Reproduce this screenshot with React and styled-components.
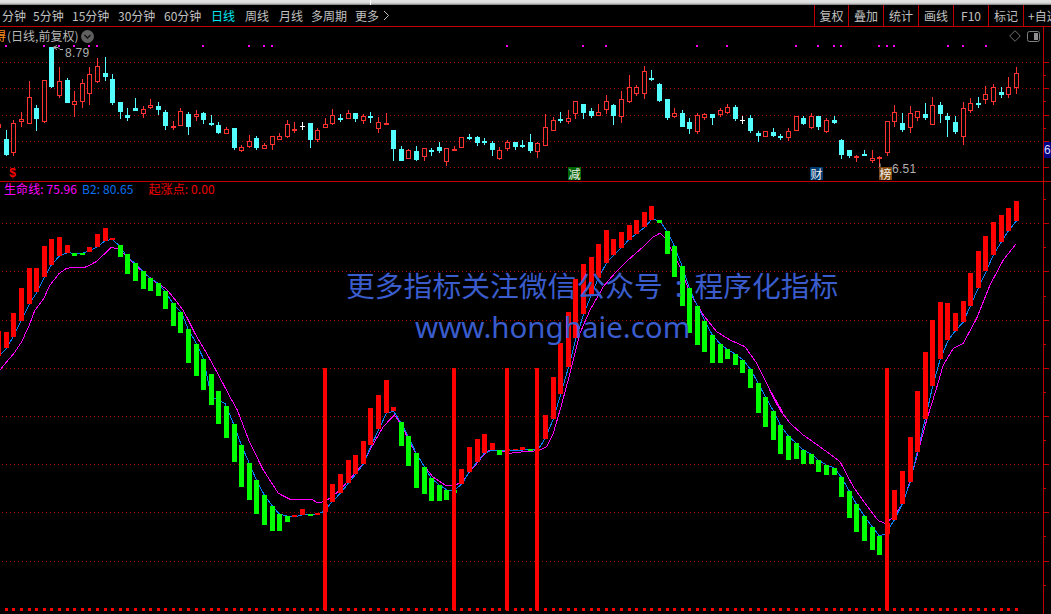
import React from 'react';
import styled, { createGlobalStyle } from 'styled-components';

const Global = createGlobalStyle`
  html, body { margin: 0; padding: 0; background: #000; }
  #root { width: 1051px; height: 614px; overflow: hidden; }
`;

const FONT = `"Noto Sans CJK SC", "Liberation Sans", sans-serif`;
const RED_LINE = '#c00000';
const GRID = '#a80000';

const Shell = styled.div`
  display: flex;
  flex-direction: column;
  width: 1051px;
  height: 614px;
  background: #000;
  overflow: hidden;
  font-family: ${FONT};
`;
const WindowEdge = styled.div`
  display: flex;
  flex: 0 0 5px;
  background: linear-gradient(#e4e4e4 0, #d8d8d8 60%, #777 100%);
`;
const EdgeLeft = styled.div`
  width: 370px;
  border-right: 1px solid #fff;
`;
const Toolbar = styled.div`
  display: flex;
  justify-content: space-between;
  flex: 0 0 21px;
  height: 21px;
  border-bottom: 1px solid ${RED_LINE};
`;
const TabRow = styled.div`
  display: flex;
  align-items: center;
  padding-left: 2px;
`;
const Tab = styled.div`
  width: ${p => p.$w}px;
  flex: none;
  font-size: 12px;
  line-height: 21px;
  color: ${p => (p.$active ? '#00e8f0' : '#c0c0c0')};
  white-space: nowrap;
`;
const Chevron = styled.svg`
  width: 7px;
  height: 11px;
  margin-left: -1px;
`;
const ToolRow = styled.div`
  display: flex;
`;
const ToolButton = styled.div`
  width: ${p => p.$w}px;
  box-sizing: border-box;
  border-left: 1px solid ${RED_LINE};
  font-size: 12px;
  line-height: 21px;
  color: #c0c0c0;
  text-align: center;
  white-space: nowrap;
  overflow: hidden;
`;
const ClippedTool = styled(ToolButton)`
  text-align: left;
  padding-left: 4px;
`;
const Panel = styled.div`
  position: relative;
  flex: 0 0 ${p => p.$h}px;
  height: ${p => p.$h}px;
  border-bottom: ${p => (p.$line ? `1px solid ${RED_LINE}` : 'none')};
`;
const Plot = styled.svg`
  display: block;
  width: 1051px;
  height: 100%;
`;
const TitleBar = styled.div`
  position: absolute;
  left: -6px;
  top: 1px;
  display: flex;
  align-items: center;
  font-size: 12px;
  line-height: 16px;
  color: #b8b8b8;
  white-space: nowrap;
`;
const StockName = styled.span`
  color: #ff9020;
  margin-right: 1px;
`;
const Caret = styled.svg`
  width: 13px;
  height: 13px;
  margin-left: 3px;
`;
const PanelTools = styled.div`
  position: absolute;
  right: 11px;
  top: 3px;
  display: flex;
  align-items: center;
  gap: 6px;
`;
const Price = styled.span`
  position: absolute;
  left: ${p => p.$x}px;
  top: ${p => p.$y}px;
  font-family: "Liberation Sans", sans-serif;
  font-size: 12px;
  line-height: 14px;
  letter-spacing: 0.3px;
  color: #b0b0b0;
`;
const Tag = styled.span`
  position: absolute;
  left: ${p => p.$x}px;
  top: 140px;
  width: 13px;
  height: 13px;
  background: ${p => p.$bg};
  color: #f0f0f0;
  font-size: 12px;
  line-height: 13px;
  text-align: center;
`;
const Signal = styled.span`
  position: absolute;
  left: 9px;
  top: 141px;
  font-family: "Liberation Mono", monospace;
  font-weight: bold;
  font-size: 12px;
  line-height: 13px;
  color: #f00;
`;
const AxisFlag = styled.span`
  position: absolute;
  left: 1044px;
  top: 115px;
  width: 7px;
  height: 16px;
  overflow: hidden;
  background: #000080;
  color: #d8d8ff;
  font-family: "Liberation Sans", sans-serif;
  font-size: 12px;
  line-height: 16px;
`;
const Legend = styled.div`
  position: absolute;
  left: 4px;
  top: -1px;
  display: flex;
  font-size: 12px;
  line-height: 16px;
  letter-spacing: 0.1px;
  white-space: nowrap;
`;
const LegendItem = styled.span`
  color: ${p => p.$c};
  margin-right: ${p => p.$gap}px;
`;
const Watermark = styled.div`
  position: absolute;
  left: 346px;
  top: 82px;
  color: #3a5ccc;
  font-size: 28.8px;
  line-height: 42px;
  white-space: pre;
`;
const WatermarkColon = styled.span`
  margin: 0 11.6px 0 12px;
`;
const WatermarkUrl = styled.div`
  font-family: "Noto Sans", sans-serif;
  font-size: 29.5px;
  line-height: 40px;
  margin-left: 69px;
  margin-top: 1px;
`;

/* ---------- data ---------- */
const xAt = i => Math.floor(6.33 + 7.594 * i);

// kind, high, bodyTop, bodyBottom, low (in 3x crop units, origin y = 60)
const K = [
  ['c',210,237,285,288],['r',180,190,278,288],['r',156,178,186,201],['r',63,112,192,192],['c',135,144,177,213],
  ['r',60,61,186,188],['c',-39,-39,81,84],['r',21,64,108,114],['c',54,60,129,129],['r',93,124,135,171],
  ['r',57,69,126,144],['r',21,42,102,135],['r',-6,18,66,69],['c',-9,39,51,63],['c',42,57,129,135],
  ['c',126,126,156,177],['c',144,165,174,183],['c',114,144,153,153],['r',138,147,162,174],['r',117,135,144,147],
  ['c',126,138,150,165],['c',150,156,198,210],['r',183,198,204,210],['r',144,153,198,198],['c',156,162,201,225],
  ['r',150,162,171,183],['c',156,159,180,192],['c',165,189,195,198],['c',186,195,219,222],['r',201,207,222,222],
  ['c',204,204,264,270],['r',255,261,273,276],['r',225,243,261,264],['c',228,234,264,270],['r',249,255,267,267],
  ['r',228,228,255,270],['r',219,228,240,240],['r',180,192,231,234],['r',186,207,213,219],['w',186,198,198,210],
  ['c',189,189,240,264],['r',204,210,240,246],['r',174,192,204,204],['r',147,165,192,195],['c',162,174,180,186],
  ['r',150,159,177,177],
  ['c',159,159,177,186],['r',162,168,183,192],['c',156,168,171,189],['r',171,186,207,219],['r',159,189,195,195],
  ['c',210,210,267,303],['c',258,267,303,303],['r',267,270,297,297],['c',258,273,300,303],['r',264,264,291,303],
  ['c',264,270,273,288],['c',246,261,273,279],['r',264,264,306,318],['r',258,267,273,273],['r',231,231,264,264],
  ['c',222,231,234,240],['c',228,231,249,258],['c',234,243,249,255],['c',243,249,270,288],['r',261,270,297,300],
  ['r',240,246,267,273],['c',246,246,261,270],['c',240,255,261,264],['c',222,246,273,279],['r',246,249,276,294],
  ['r',162,201,258,258],['r',171,180,213,213],['c',156,177,183,189],['r',150,174,186,192],['r',123,123,162,177],
  ['c',132,132,159,177],['c',144,153,168,174],['r',132,156,168,168],['r',105,123,150,162],['c',132,135,168,195],
  ['r',93,117,171,189],['r',45,81,126,129],['r',75,81,102,108],['r',18,33,102,117],['c',30,54,57,63],
  ['c',69,72,123,126],['c',117,117,174,180],['r',144,159,171,174],['c',150,159,201,201],['c',174,186,207,222],
  ['r',159,165,216,222],
  ['r',159,162,174,180],['c',162,162,174,195],['r',144,150,165,171],['r',132,141,159,162],['c',135,141,177,183],
  ['w',168,180,180,192],['c',165,174,213,219],['c',213,219,228,246],['r',213,213,231,231],['c',204,216,228,231],
  ['c',222,228,231,240],['r',204,213,234,243],['r',168,168,213,213],['c',168,174,192,195],['r',159,168,204,207],
  ['c',168,168,201,210],['r',174,180,216,219],['c',168,180,189,192],['c',237,240,285,297],['c',270,270,288,294],
  ['r',285,288,291,306],['c',270,282,288,288],['r',270,294,303,309],['r',288,291,294,324],['r',183,183,279,288],
  ['r',135,156,186,201],['c',159,189,210,216],['r',138,159,204,219],['r',153,153,174,183],['c',129,162,174,180],
  ['r',111,135,195,195],['c',126,135,162,189],['c',159,168,180,231],['c',168,186,216,222],['r',126,144,231,255],
  ['r',114,129,153,159],['c',111,129,132,144],['r',78,102,120,132],['r',72,81,126,135],['c',81,96,105,114],
  ['r',51,81,105,114],['r',21,39,84,102],
];

// colour, top, bottom (screen px)
const BARS = [
  ['r',332,348],['r',313,337],['r',288,321],['r',268,304],['r',268,292],['r',246,277],['r',239,265],['r',237,256],
  ['r',245,253],['g',253,256],['g',253,255],['r',247,252],['r',234,247],['r',228,241],['r',238,240],['g',245,257],
  ['g',254,274],['g',263,281],['g',271,289],['g',278,291],['g',283,296],['g',291,309],['g',303,326],['g',312,333],
  ['g',329,363],['g',344,376],['g',359,390],['g',374,405],['g',391,424],['g',406,438],['g',424,462],['g',445,487],
  ['g',463,500],['g',480,514],['g',495,525],['g',506,531],['g',514,531],['g',516,522],['r',515,517],['r',509,515],
  ['g',514,516],['r',513,515],['r',504,512],['r',484,502],['r',474,493],['r',460,483],['r',455,474],['r',441,464],
  ['r',408,445],['r',395,429],['r',380,413],['r',407,411],['g',422,446],['g',436,466],['g',453,488],['g',467,494],
  ['g',478,501],['g',485,501],['g',490,500],['g',490,493],['r',469,484],['r',447,472],['r',439,462],['r',434,453],
  ['r',443,450],['g',450,455],['r',449,451],['r',449,450],['r',447,450],['g',449,451],['r',449,451],['r',415,439],
  ['r',377,419],['r',343,394],['r',312,367],['r',279,338],['r',264,314],['r',257,295],['r',244,278],['r',230,263],
  ['r',239,255],['r',232,248],['r',225,240],['r',220,234],['r',212,227],['r',206,220],['g',220,223],['g',231,254],
  ['g',246,277],['g',266,306],['g',288,333],['g',306,345],['g',321,352],['g',335,363],['g',344,363],['g',349,359],
  ['g',354,365],['g',360,373],['g',369,388],['g',383,413],['g',397,427],['g',411,440],['g',425,454],['g',436,460],
  ['g',443,459],['g',450,464],['g',454,464],['g',460,472],['g',465,475],['g',468,475],['g',477,497],['g',491,518],
  ['g',504,532],['g',516,541],['g',527,550],['g',536,555],['r',523,534],['r',490,520],['r',471,504],['r',437,482],
  ['r',391,452],['r',352,419],['r',320,386],['r',302,359],['r',303,340],['r',313,331],['r',301,322],['r',273,306],
  ['r',251,288],['r',236,271],['r',222,255],['r',215,242],['r',208,231],['r',201,221],
];

const crop = (ox, oy, pts) => pts.map(([x, y]) => [ox + x / 3, oy + y / 3]);
const toPts = list => list.map(([x, y]) => `${x.toFixed(1)},${y.toFixed(1)}`).join(' ');

const BLUE = [
  ...crop(0, 200, [[0,465],[20,445],[45,400],[65,360],[88,312],[110,278],[133,232],[154,195],[178,168],[202,158],[225,160],[247,160],[268,152],[292,140],[316,122],[337,118],[361,140],[382,172],[406,190],[430,215],[451,234],[475,250],[496,275],[520,312],[544,337],[565,388],[589,430],[610,475]]),
  ...crop(150, 400, [[184,-10],[200,-2],[225,10],[250,70],[274,135],[298,190],[319,240],[343,285],[367,318],[388,342],[412,348],[433,350],[457,345],[481,344],[502,343],[520,335],[547,305],[571,280],[595,250],[618,222],[640,192],[664,135],[687,88],[709,40],[731,34],[754,70],[775,110],[799,160],[823,200],[844,235],[868,255],[891,270],[915,270],[937,250],[958,215],[982,185],[1003,160],[1027,150]]),
  ...crop(490, 200, [[30,750],[60,752],[100,750],[145,748],[166,715],[190,657],[213,580],[236,500],[259,412],[281,342],[304,285],[326,232],[350,188],[371,165],[394,143],[418,118],[441,100],[464,82],[485,58],[509,62],[532,95],[553,138],[577,200],[598,265],[622,318],[646,365],[667,405],[691,432],[712,448],[736,462],[760,480],[781,507],[805,550],[826,590],[850,632],[871,675]]),
  ...crop(740, 390, [[145,138],[169,160],[190,180],[214,192],[235,210],[259,225],[283,234],[304,261],[328,303],[349,342],[373,378],[397,411],[418,437],[435,432],[463,390],[487,342],[511,276],[532,186],[556,87]]),
  ...crop(740, 190, [[578,588],[601,507],[625,450],[646,423],[670,396],[691,348],[715,294],[739,243],[760,195],[784,156],[805,123],[829,93]]),
];

const MAGENTA = [
  ...crop(0, 200, [[0,510],[20,485],[42,460],[65,425],[88,375],[105,330],[130,298],[150,255],[178,220],[200,205],[225,202],[250,204],[270,195],[290,184],[310,165],[332,143],[352,145],[370,160],[400,190],[430,217],[465,245],[500,268],[530,305],[552,335],[590,410],[620,460],[650,515],[695,600]]),
  ...crop(150, 400, [[262,30],[300,130],[340,210],[385,280],[420,298],[485,298],[500,307],[515,307],[540,295],[570,270],[610,225],[640,190],[665,140],[700,80],[733,45],[755,75],[780,130],[820,195],[850,232],[885,255],[915,258],[945,235],[960,215],[985,185],[1000,165],[1020,150]]),
  ...crop(490, 200, [[30,752],[60,760],[100,755],[145,752],[170,740],[190,700],[213,620],[240,520],[270,400],[300,330],[340,260],[370,225],[420,175],[460,140],[490,110],[510,100],[525,115],[545,150],[570,200],[600,280],[640,345],[680,395],[720,420],[765,440],[800,490],[840,570],[880,640]]),
  ...crop(740, 390, [[88,0],[120,60],[150,100],[190,135],[225,160],[260,185],[300,215],[340,290],[375,340],[415,392],[435,400],[455,385],[490,340],[525,220],[560,90],[588,0]]),
  ...crop(740, 190, [[610,525],[640,475],[670,460],[710,385],[750,285],[790,210],[828,162]]),
];

const SPIKES = [42, 59, 66, 70, 116];
const DOTS = [6,44,59,74,89,97,203,249,264,272,507,583,606,697,727,796,818,834,841,879,887,894,948,963,986];
const CANDLE = { r: '#ff3232', c: '#54ffff', w: '#ffffff' };
const BAR = { r: '#ff0000', g: '#00ff00' };

const Grid = ({ ys }) => ys.map(y => (
  <line key={y} x1="2" x2="1040" y1={y + 0.5} y2={y + 0.5} stroke={GRID} strokeDasharray="1 3" />
));

const Axis = ({ y0, y1, major, minor }) => (
  <g stroke={RED_LINE} shapeRendering="crispEdges">
    <line x1="1043.5" x2="1043.5" y1={y0} y2={y1} />
    {major.map(y => <line key={y} x1="1044" x2="1049" y1={y + 0.5} y2={y + 0.5} />)}
    {minor.map(y => <line key={y} x1="1044" x2="1046" y1={y + 0.5} y2={y + 0.5} />)}
  </g>
);

const Candle = ({ i, k }) => {
  const [kind, hi, top, bot, lo] = k;
  const xc = xAt(i);
  const c = CANDLE[kind];
  const yy = z => Math.round(60 + z / 3);
  const t = yy(top), b = yy(bot);
  return (
    <g shapeRendering="crispEdges">
      <rect x={xc} y={yy(hi)} width="1" height={Math.max(yy(lo) - yy(hi), 1)} fill={c} />
      {kind === 'c' && <rect x={xc - 2} y={t} width="5" height={Math.max(b - t, 2)} fill={c} />}
      {kind === 'w' && <rect x={xc - 2} y={t} width="5" height="1" fill={c} />}
      {kind === 'r' && (
        <rect x={xc - 1.5} y={t + 0.5} width="4" height={Math.max(b - t - 1, 1)} fill="#000" stroke={c} />
      )}
    </g>
  );
};

const Upper = () => (
  <Plot viewBox="0 27 1051 154">
    <Grid ys={[62, 88, 115, 141, 167]} />
    <Axis y0={27} y1={181} major={[62, 88, 115, 141, 167]} minor={[75, 101, 128, 154]} />
    {DOTS.map(x => <rect key={x} x={x - 1} y="45" width="2" height="2" fill="#ff00ff" shapeRendering="crispEdges" />)}
    <rect x="0" y="124" width="1" height="4" fill="#ff3232" />
    {K.map((k, i) => <Candle key={i} i={i} k={k} />)}
    <path d="M53 47.5 L57 45.5 M53 47.5 L57 49.5 M53 47.5 H58 L60 49.5 H63" fill="none" stroke="#b0b0b0" />
    <path d="M880 163.5 V168 H884" fill="none" stroke="#b0b0b0" />
  </Plot>
);

const Lower = () => (
  <Plot viewBox="0 182 1051 432">
    <Grid ys={[223, 271, 320, 368, 416, 464, 512, 561]} />
    <Axis y0={182} y1={614} major={[223, 271, 320, 368, 416, 464, 512, 561]} minor={[199, 247, 296, 344, 392, 440, 488, 536, 585]} />
    <g shapeRendering="crispEdges" fill="none" strokeWidth="1">
      <polyline points={toPts(MAGENTA)} stroke="#ff00ff" />
      <polyline points={toPts(BLUE)} stroke="#0a80ff" />
    </g>
    <g shapeRendering="crispEdges">
      <rect x="0" y="331" width="1" height="25" fill="#f00" />
      {BARS.map(([c, t, b], i) => (
        <rect key={i} x={xAt(i) - 2} y={t} width="5" height={b - t} fill={BAR[c]} />
      ))}
      {BARS.map((_, i) => (
        <rect key={i} x={xAt(i) - 1} y="608" width="3" height="3" fill="#f00" />
      ))}
      {SPIKES.map(i => (
        <rect key={i} x={xAt(i) - 2} y="368" width="4" height="242" fill="#f00" />
      ))}
    </g>
  </Plot>
);

const TABS = [
  ['分钟', 31], ['5分钟', 39], ['15分钟', 46], ['30分钟', 46], ['60分钟', 47],
  ['日线', 34, true], ['周线', 34], ['月线', 32], ['多周期', 44], ['更多', 29],
];
const TOOLS = [['复权', 34], ['叠加', 35], ['统计', 35], ['画线', 35], ['F10', 35], ['标记', 35]];

export default function App() {
  return (
    <Shell>
      <Global />
      <WindowEdge><EdgeLeft /></WindowEdge>
      <Toolbar>
        <TabRow>
          {TABS.map(([t, w, a]) => <Tab key={t} $w={w} $active={a}>{t}</Tab>)}
          <Chevron viewBox="0 0 7 11"><path d="M1 1 L5.5 5.5 L1 10" fill="none" stroke="#c0c0c0" /></Chevron>
        </TabRow>
        <ToolRow>
          {TOOLS.map(([t, w]) => <ToolButton key={t} $w={w}>{t}</ToolButton>)}
          <ClippedTool $w={28}>+自选</ClippedTool>
        </ToolRow>
      </Toolbar>
      <Panel $h={154} $line>
        <Upper />
        <TitleBar>
          <StockName>得</StockName>
          <span>(日线,前复权)</span>
          <Caret viewBox="0 0 13 13">
            <circle cx="6.5" cy="6.5" r="6.5" fill="#606060" />
            <path d="M3.5 5 L6.5 8 L9.5 5" fill="none" stroke="#111" strokeWidth="1.3" />
          </Caret>
        </TitleBar>
        <PanelTools>
          <svg width="12" height="12" viewBox="0 0 12 12">
            <path d="M6 .7 L11.3 6 L6 11.3 L.7 6 Z" fill="none" stroke="#707070" />
          </svg>
          <svg width="13" height="11" viewBox="0 0 13 11">
            <rect x=".5" y=".5" width="12" height="10" rx="2" fill="none" stroke="#808080" />
            <rect x="7" y="2" width="4" height="7" fill="#909090" />
          </svg>
        </PanelTools>
        <Price $x={65} $y={19}>8.79</Price>
        <Price $x={892} $y={135}>6.51</Price>
        <Signal>$</Signal>
        <Tag $x={568} $bg="#006400">减</Tag>
        <Tag $x={810} $bg="#003a70">财</Tag>
        <Tag $x={879} $bg="#80480c">榜</Tag>
        <AxisFlag>6</AxisFlag>
      </Panel>
      <Panel $h={432}>
        <Lower />
        <Legend>
          <LegendItem $c="#ff00ff" $gap={5}>生命线: 75.96</LegendItem>
          <LegendItem $c="#0a70f0" $gap={15}>B2: 80.65</LegendItem>
          <LegendItem $c="#f00000" $gap={0}>起涨点: 0.00</LegendItem>
        </Legend>
        <Watermark>
          更多指标关注微信公众号<WatermarkColon>:</WatermarkColon>程序化指标
          <WatermarkUrl>www.honghaie.com</WatermarkUrl>
        </Watermark>
      </Panel>
    </Shell>
  );
}
